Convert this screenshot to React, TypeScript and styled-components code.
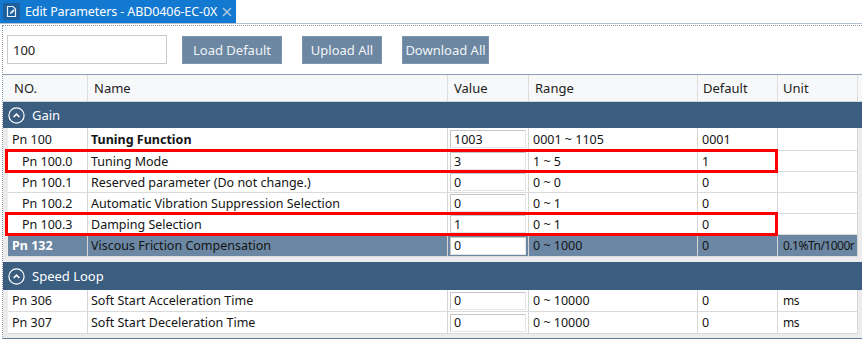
import React from "react";
import styled, { createGlobalStyle } from "styled-components";

const GlobalStyle = createGlobalStyle`
  body {
    margin: 0;
    background: #fff;
    font-family: "Noto Sans", "Microsoft YaHei", sans-serif;
    font-size: 12.5px;
    color: #1c1c1c;
  }
`;

const Window = styled.div`
  width: 862px;
  height: 341px;
  overflow: hidden;
  background: #fff;
`;

const TabBar = styled.div`
  display: flex;
  height: 23px;
  border-bottom: 1px solid #b4c2d1;
`;

const Tab = styled.div`
  display: flex;
  align-items: center;
  width: 236px;
  background: #1278d0;
  color: #fff;
  font-size: 12.5px;
  padding-left: 3px;
  box-sizing: border-box;
  gap: 5px;

  svg {
    flex-shrink: 0;
  }
`;

const TabTitle = styled.span`
  flex: 1;
  white-space: nowrap;
  letter-spacing: -0.1px;
`;

const Panel = styled.div`
  margin: 1px 0 0 2px;
  border-top: 1px dotted #8c99a8;
  border-left: 1px dotted #8c99a8;
`;

const Toolbar = styled.div`
  display: flex;
  align-items: center;
  padding: 9px 0 10px 4px;
`;

const SearchBox = styled.div`
  width: 160px;
  height: 29px;
  box-sizing: border-box;
  border: 1px solid #c9c9c9;
  padding-left: 5px;
  display: flex;
  align-items: center;
  font-size: 13px;
  margin-right: 15px;
`;

const Button = styled.div<{ w: number }>`
  width: ${p => p.w}px;
  height: 28px;
  box-sizing: border-box;
  background: #6c87a2;
  border: 1px solid #7f97ae;
  color: #f1f4f7;
  font-size: 13px;
  display: flex;
  align-items: center;
  justify-content: center;
  margin-right: 20px;
`;

const Table = styled.div`
  border-top: 1px solid #8aa0b7;
  border-bottom: 1px solid #5f7b97;
  background: #ececec;
`;

const COLS = "360px 81px 169px 80px 80px";

const HeaderRow = styled.div`
  display: grid;
  grid-template-columns: 85px ${COLS} 1fr;
  height: 26px;
  background: #f7f8f9;
  border-bottom: 1px solid #d2d6da;
`;

const HeaderCell = styled.div<{ pad?: number }>`
  display: flex;
  align-items: center;
  padding-left: ${p => p.pad ?? 6}px;
  border-right: 1px solid #dedede;
  color: #222;
  font-size: 13px;
  &:last-child {
    border-right: none;
  }
`;

const GroupHeader = styled.div<{ h: number }>`
  display: flex;
  align-items: center;
  gap: 7px;
  height: ${p => p.h}px;
  padding-left: 5px;
  background: #3a5d80;
  color: #fff;
  font-size: 13px;
`;

const GroupBody = styled.div<{ gapBottom: number }>`
  padding: 0 4px ${p => p.gapBottom}px 5px;
`;

const Row = styled.div<{ selected?: boolean; h: number }>`
  position: relative;
  display: grid;
  grid-template-columns: 80px ${COLS};
  height: ${p => p.h}px;
  background: ${p => (p.selected ? "#6b87a3" : "#fff")};
  border-bottom: 1px solid #dadada;
`;

const Cell = styled.div<{ pad?: number; bold?: boolean; light?: boolean }>`
  display: flex;
  align-items: center;
  padding-left: ${p => p.pad ?? 4}px;
  border-right: 1px solid #d6d6d6;
  white-space: nowrap;
  overflow: hidden;
  font-weight: ${p => (p.bold ? 700 : 400)};
  color: ${p => (p.light ? "#fff" : "#141414")};
`;

const UnitText = styled.span`
  font-size: 12px;
  letter-spacing: -0.5px;
`;

const ValueCell = styled.div`
  display: flex;
  align-items: center;
  padding: 0 2px;
  border-right: 1px solid #d6d6d6;
`;

const ValueInput = styled.div`
  flex: 1;
  height: 18px;
  box-sizing: border-box;
  background: #fff;
  border: 1px solid #c4c4c4;
  border-bottom-color: #e4e4e4;
  border-right-color: #e4e4e4;
  padding-left: 3px;
  display: flex;
  align-items: center;
  color: #141414;
`;

const Marker = styled.div`
  position: absolute;
  left: -3px;
  right: 80px;
  top: -2px;
  bottom: -2px;
  border: 3px solid #ff0000;
  pointer-events: none;
  z-index: 2;
`;

type Param = {
  code: string;
  name: string;
  value: string;
  range: string;
  def: string;
  unit?: string;
  sub?: boolean;
  boldName?: boolean;
  marked?: boolean;
  selected?: boolean;
  h?: number;
};

const gain: Param[] = [
  { code: "Pn 100", name: "Tuning Function", value: "1003", range: "0001 ~ 1105", def: "0001", boldName: true, h: 22 },
  { code: "Pn 100.0", name: "Tuning Mode", value: "3", range: "1 ~ 5", def: "1", sub: true, marked: true },
  { code: "Pn 100.1", name: "Reserved parameter (Do not change.)", value: "0", range: "0 ~ 0", def: "0", sub: true },
  { code: "Pn 100.2", name: "Automatic Vibration Suppression Selection", value: "0", range: "0 ~ 1", def: "0", sub: true },
  { code: "Pn 100.3", name: "Damping Selection", value: "1", range: "0 ~ 1", def: "0", sub: true, marked: true },
  { code: "Pn 132", name: "Viscous Friction Compensation", value: "0", range: "0 ~ 1000", def: "0", unit: "0.1%Tn/1000r", selected: true, h: 21 },
];

const speed: Param[] = [
  { code: "Pn 306", name: "Soft Start Acceleration Time", value: "0", range: "0 ~ 10000", def: "0", unit: "ms", h: 21 },
  { code: "Pn 307", name: "Soft Start Deceleration Time", value: "0", range: "0 ~ 10000", def: "0", unit: "ms", h: 21 },
];

const DocIcon = () => (
  <svg width="17" height="17" viewBox="0 0 17 17">
    <rect x="0" y="0" width="17" height="17" rx="2" fill="#1d5e9c" />
    <path d="M4.5 3.5h5.5l2.5 2.5v7.5h-8z" fill="none" stroke="#e8f0f8" strokeWidth="1.2" />
    <path d="M7 11l0.4-1.8 3-3 1.4 1.4-3 3z" fill="#e8f0f8" />
  </svg>
);

const CloseIcon = () => (
  <svg width="10" height="10" viewBox="0 0 10 10" style={{ marginRight: 4 }}>
    <path d="M1 1l8 8M9 1l-8 8" stroke="#b9cde0" strokeWidth="1.4" />
  </svg>
);

const CollapseIcon = () => (
  <svg width="17" height="17" viewBox="0 0 17 17">
    <circle cx="8.5" cy="8.5" r="7.6" fill="none" stroke="#fff" strokeWidth="1.2" />
    <path d="M5.6 10l2.9-2.9 2.9 2.9" fill="none" stroke="#fff" strokeWidth="1.6" />
  </svg>
);

const ParamRow = ({ p }: { p: Param }) => (
  <Row selected={p.selected} h={p.h ?? 20}>
    <Cell pad={p.sub ? 14 : 4} bold={p.selected} light={p.selected}>
      {p.code}
    </Cell>
    <Cell pad={3} bold={p.boldName}>
      {p.name}
    </Cell>
    <ValueCell>
      <ValueInput>{p.value}</ValueInput>
    </ValueCell>
    <Cell>{p.range}</Cell>
    <Cell>{p.def}</Cell>
    <Cell pad={5}>
      <UnitText>{p.unit}</UnitText>
    </Cell>
    {p.marked && <Marker />}
  </Row>
);

const Group = ({ title, items, headH, gapBottom }: { title: string; items: Param[]; headH: number; gapBottom: number }) => (
  <>
    <GroupHeader h={headH}>
      <CollapseIcon />
      {title}
    </GroupHeader>
    <GroupBody gapBottom={gapBottom}>
      {items.map(p => (
        <ParamRow key={p.code} p={p} />
      ))}
    </GroupBody>
  </>
);

export default function App() {
  return (
    <Window>
      <GlobalStyle />
      <TabBar>
        <Tab>
          <DocIcon />
          <TabTitle>Edit Parameters - ABD0406-EC-0X</TabTitle>
          <CloseIcon />
        </Tab>
      </TabBar>
      <Panel>
        <Toolbar>
          <SearchBox>100</SearchBox>
          <Button w={100}>Load Default</Button>
          <Button w={80}>Upload All</Button>
          <Button w={87}>Download All</Button>
        </Toolbar>
        <Table>
          <HeaderRow>
            <HeaderCell pad={11}>NO.</HeaderCell>
            <HeaderCell>Name</HeaderCell>
            <HeaderCell>Value</HeaderCell>
            <HeaderCell>Range</HeaderCell>
            <HeaderCell pad={5}>Default</HeaderCell>
            <HeaderCell pad={5}>Unit</HeaderCell>
            <HeaderCell />
          </HeaderRow>
          <Group title="Gain" items={gain} headH={26} gapBottom={5} />
          <Group title="Speed Loop" items={speed} headH={28} gapBottom={4} />
        </Table>
      </Panel>
    </Window>
  );
}
